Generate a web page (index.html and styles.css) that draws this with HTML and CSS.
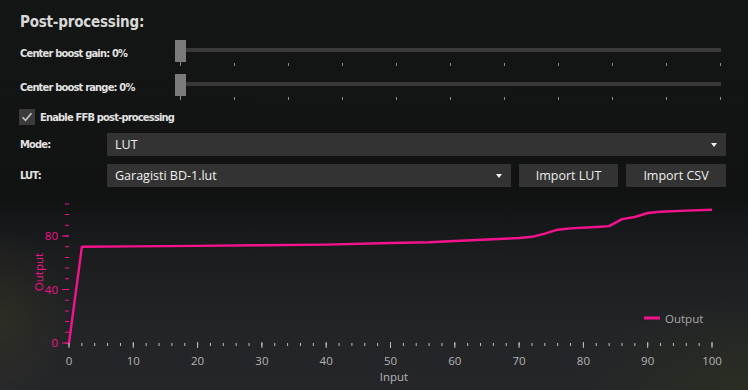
FILE: index.html
```html
<!DOCTYPE html>
<html lang="en">
<head>
    <meta charset="UTF-8">
    <title>Post-processing</title>
    <link rel="stylesheet" href="styles.css">
</head>
<body>
    <div class="panel">
        <h2 class="title">Post-processing:</h2>

        <div class="slider-row">
            <span class="label">Center boost gain: 0%</span>
            <div class="slider">
                <div class="track"></div>
                <div class="thumb"></div>
                <div class="ticks">
                    <i class="first"></i><i></i><i></i><i></i><i></i><i></i><i></i><i></i><i></i><i></i><i></i>
                </div>
            </div>
        </div>
        <div class="slider-row">
            <span class="label">Center boost range: 0%</span>
            <div class="slider">
                <div class="track"></div>
                <div class="thumb"></div>
                <div class="ticks">
                    <i class="first"></i><i></i><i></i><i></i><i></i><i></i><i></i><i></i><i></i><i></i><i></i>
                </div>
            </div>
        </div>

        <label class="check-row">
            <span class="checkbox">
                <svg width="16" height="16" viewBox="0 0 16 16"><path d="M3.5 8.3l3 3 6-7" fill="none" stroke="#c8c8c8" stroke-width="1.6"/></svg>
            </span>
            <span class="label">Enable FFB post-processing</span>
        </label>

        <div class="form-row">
            <span class="label">Mode:</span>
            <div class="combo wide">LUT<span class="arrow"></span></div>
        </div>
        <div class="form-row">
            <span class="label">LUT:</span>
            <div class="combo">Garagisti BD-1.lut<span class="arrow"></span></div>
            <button class="btn">Import LUT</button>
            <button class="btn">Import CSV</button>
        </div>
    </div>

    <svg class="chart" width="748" height="195" viewBox="0 195 748 195">
        <!-- y axis ticks -->
        <line x1="67" y1="343.5" x2="67" y2="200" stroke="#f5138d" stroke-width="4" stroke-dasharray="1 9.7"/>
        <line x1="65.5" y1="343.5" x2="65.5" y2="200" stroke="#f5138d" stroke-width="7" stroke-dasharray="1 52.5"/>
        <g class="ylab">
            <text x="58" y="347">0</text>
            <text x="58" y="240">80</text>
            <text x="58" y="294">40</text>
        </g>
        <text class="ytitle" transform="translate(43 272) rotate(-90)">Output</text>

        <!-- x axis ticks -->
        <line x1="68.5" y1="344.5" x2="720" y2="344.5" stroke="#bdbdbd" stroke-width="3" stroke-dasharray="1 11.86"/>
        <line x1="68.5" y1="345" x2="720" y2="345" stroke="#bdbdbd" stroke-width="6" stroke-dasharray="1 63.3"/>
        <g class="xlab">
            <text x="69" y="365">0</text>
            <text x="133.3" y="365">10</text>
            <text x="197.6" y="365">20</text>
            <text x="261.9" y="365">30</text>
            <text x="326.2" y="365">40</text>
            <text x="390.5" y="365">50</text>
            <text x="454.8" y="365">60</text>
            <text x="519.1" y="365">70</text>
            <text x="583.4" y="365">80</text>
            <text x="647.7" y="365">90</text>
            <text x="712" y="365">100</text>
            <text x="394" y="381">Input</text>
        </g>

        <polyline fill="none" stroke="#f5138d" stroke-width="2.4" stroke-linejoin="round"
            points="69,343 81.9,246.7 133.3,246.4 197.6,245.9 261.9,245.2 326.2,244.6 390.5,243 429.1,242.3 454.8,241 493.4,239.3 519.1,238 532,236.8 544.8,233.6 557.7,229.7 570.5,228.4 596.3,227 609.1,226.1 622,219.1 634.8,217 647.7,213 660.6,211.8 686.3,210.6 712,209.7"/>

        <!-- legend -->
        <line x1="644" y1="318" x2="660" y2="318" stroke="#f5138d" stroke-width="3"/>
        <text class="legend" x="665" y="322.5">Output</text>
    </svg>
</body>
</html>
```

FILE: styles.css
```css
body {
    margin: 0;
    width: 748px;
    height: 390px;
    overflow: hidden;
    font-family: "Open Sans", sans-serif;
    color: #e6e6e6;
    background:
        radial-gradient(ellipse 70px 90px at 0% 82%, rgba(58, 58, 34, 0.45), transparent),
        radial-gradient(ellipse 170px 90px at 100% 100%, rgba(48, 54, 26, 0.5), transparent),
        linear-gradient(to bottom, #141515 0, #111212 195px, #1b1c1e 250px, #232427 330px, #25262a 390px);
}
.panel {
    padding: 0 22px 0 20px;
}
.title {
    margin: 12px 0 0;
    font-family: "DejaVu Sans Condensed", sans-serif;
    font-size: 15px;
    font-weight: bold;
    line-height: 20px;
    letter-spacing: -0.2px;
    color: #d8d8d8;
}
.label {
    font-family: "DejaVu Sans Condensed", sans-serif;
    font-size: 11px;
    font-weight: bold;
    letter-spacing: -0.8px;
    color: #e2e2e2;
}
.slider-row {
    display: grid;
    grid-template-columns: 155px 1fr;
    align-items: start;
    height: 34px;
    margin-right: 5px;
}
.slider-row:first-of-type {
    margin-top: 8px;
}
.slider-row .label {
    padding-top: 3px;
    line-height: 22px;
}
.slider {
    position: relative;
    height: 26px;
}
.track {
    margin-top: 8px;
    height: 4px;
    background: #393939;
}
.thumb {
    position: absolute;
    left: 0;
    top: 0;
    width: 11px;
    height: 22px;
    background: #7b7b7b;
}
.ticks {
    display: flex;
    justify-content: space-between;
    margin: 11px 0 0 5px;
    width: 541px;
}
.ticks i {
    display: block;
    width: 1px;
    height: 3px;
    background: #8a8a8a;
}
.ticks i.first {
    height: 4px;
    margin-top: -1px;
}
.check-row {
    display: flex;
    align-items: center;
    gap: 5px;
    margin: 1px 0 0 -1px;
    height: 16px;
}
.checkbox {
    width: 16px;
    height: 16px;
    background: #3b3b3b;
}
.checkbox svg {
    display: block;
}
.form-row {
    display: grid;
    grid-template-columns: 79px 404px 99px 100px;
    column-gap: 8px;
    align-items: center;
    height: 23px;
    margin-top: 8px;
}
.combo {
    position: relative;
    height: 23px;
    line-height: 23px;
    padding-left: 8px;
    background: #333333;
    font-size: 12.5px;
    color: #f0f0f0;
}
.combo.wide {
    grid-column: 2 / 5;
}
.arrow {
    position: absolute;
    right: 9px;
    top: 10px;
    border-left: 3.5px solid transparent;
    border-right: 3.5px solid transparent;
    border-top: 4px solid #f2f2f2;
}
.btn {
    height: 23px;
    border: none;
    padding: 0;
    background: #333333;
    font-family: "Open Sans", sans-serif;
    font-size: 12.5px;
    color: #ececec;
}
.chart {
    display: block;
    position: absolute;
    left: 0;
    top: 195px;
}
.chart text {
    font-family: "Open Sans", sans-serif;
    font-size: 11.5px;
}
.ylab text {
    fill: #f5138d;
    text-anchor: end;
}
.ytitle {
    fill: #f5138d;
    text-anchor: middle;
}
.xlab text {
    fill: #b4b4b4;
    text-anchor: middle;
}
.legend {
    fill: #a8a8a8;
}
```
